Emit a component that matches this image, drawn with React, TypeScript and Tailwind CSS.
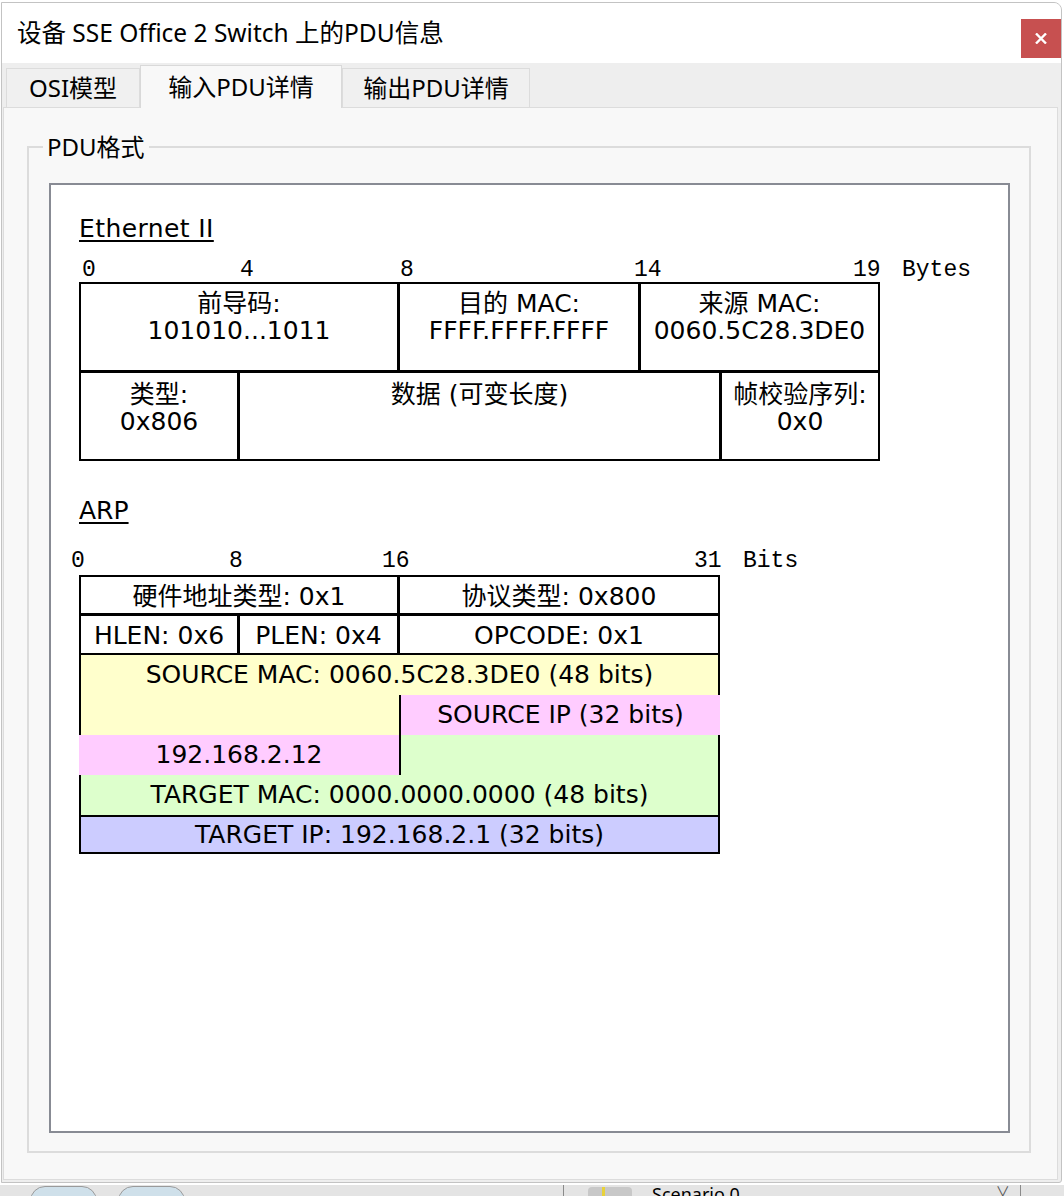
import React from "react";

const ui = "font-['Noto_Sans','Noto_Sans_CJK_SC',sans-serif]";
const cellFont = "font-['DejaVu_Sans','Noto_Sans_CJK_SC',sans-serif]";
const mono = "font-['Liberation_Mono','DejaVu_Sans_Mono',monospace]";

const Cell = ({ lines, className = "" }: { lines: string[]; className?: string }) => (
  <div className={`flex flex-col items-center leading-[27px] ${className}`}>
    {lines.map((l) => (
      <span key={l} className="whitespace-pre">{l}</span>
    ))}
  </div>
);

const Tab = ({ label, active }: { label: string; active?: boolean }) =>
  active ? (
    <div className="relative z-10 -mb-px flex h-[43px] w-[202px] items-center justify-center border-x border-t border-[#d9d9d9] bg-[#f8f8f8] text-[24px] leading-[32px] text-black">
      {label}
    </div>
  ) : (
    <div className="flex h-[39px] items-center justify-center border-x border-t border-[#dcdcdc] bg-[#f0f0f0] text-[24px] leading-[32px] text-black">
      {label}
    </div>
  );

export default function App() {
  return (
    <div className={`flex h-[1196px] w-[1064px] flex-col overflow-hidden bg-white ${ui}`}>
      {/* window */}
      <div className="ml-px mt-[2px] flex h-[1181px] w-[1061px] flex-col overflow-hidden rounded-tr-[8px] rounded-br-[3px] border border-[#c3c3c3] bg-[#eeeeee]">
        {/* title bar */}
        <div className="flex h-[60px] shrink-0 items-start justify-between bg-white">
          <div className="pl-[15px] pt-[14px] text-[24.5px] leading-[32px] text-black">设备 SSE Office 2 Switch 上的PDU信息</div>
          <div className="mt-[16px] flex h-[39px] w-[40px] items-center justify-center bg-[#c75050]">
            <svg width="12" height="11" viewBox="0 0 12 11">
              <path d="M1 0.5 L11 10.5 M11 0.5 L1 10.5" stroke="white" strokeWidth="2.4" fill="none" />
            </svg>
          </div>
        </div>

        {/* tabs */}
        <div className="flex h-[44px] shrink-0 items-end pl-[4px]">
          <div className="w-[134px]"><Tab label="OSI模型" /></div>
          <Tab label="输入PDU详情" active />
          <div className="w-[188px]"><Tab label="输出PDU详情" /></div>
        </div>

        {/* panel */}
        <div className="mb-[2px] ml-px mr-[3px] flex-1 border border-[#dcdcdc] bg-[#f8f8f8] pl-[23px] pr-[26px] pt-[23px]">
          <fieldset className="m-0 min-w-0 border-2 border-[#dcdcdc] p-0">
            <legend className="ml-[14px] px-[4px] text-[24px] leading-[32px] text-black">PDU格式</legend>
            <div className={`mb-[18px] ml-[20px] mr-[19px] mt-[20px] h-[950px] border-2 border-[#888b94] bg-white pl-[28px] pt-[29px] text-[25px] text-black ${cellFont}`}>
              {/* Ethernet II */}
              <div className="leading-[30px] tracking-[0.4px] underline decoration-2 underline-offset-[3px]">Ethernet II</div>
              <div className={`ml-[3px] mt-[14px] flex h-[24px] text-[23px] leading-[24px] ${mono}`}>
                <span className="w-[158px]">0</span>
                <span className="w-[160px]">4</span>
                <span className="w-[234px]">8</span>
                <span className="w-[219px]">14</span>
                <span className="w-[49px]">19</span>
                <span>Bytes</span>
              </div>
              <div className="w-[801px] border-2 border-black">
                <div className="flex h-[86px]">
                  <Cell className="w-[316px] pt-[6px]" lines={["前导码:", "101010...1011"]} />
                  <Cell className="w-[241px] border-l-[3px] border-black pt-[6px]" lines={["目的 MAC:", "FFFF.FFFF.FFFF"]} />
                  <Cell className="flex-1 border-l-[3px] border-black pt-[6px]" lines={["来源 MAC:", "0060.5C28.3DE0"]} />
                </div>
                <div className="flex h-[89px] border-t-[3px] border-black">
                  <Cell className="w-[156px] pt-[8px]" lines={["类型:", "0x806"]} />
                  <Cell className="w-[482px] border-l-[3px] border-black pt-[8px]" lines={["数据 (可变长度)"]} />
                  <Cell className="flex-1 border-l-[3px] border-black pt-[8px]" lines={["帧校验序列:", "0x0"]} />
                </div>
              </div>

              {/* ARP */}
              <div className="mt-[35px] leading-[30px] underline decoration-2 underline-offset-[3px]">ARP</div>
              <div className={`-ml-[8px] mt-[23px] flex h-[24px] text-[23px] leading-[24px] ${mono}`}>
                <span className="w-[158px]">0</span>
                <span className="w-[153px]">8</span>
                <span className="w-[312px]">16</span>
                <span className="w-[49px]">31</span>
                <span>Bits</span>
              </div>
              <div className="mt-[2px] w-[641px]">
                <div className="border-2 border-black">
                  <div className="flex h-[36px]">
                    <div className="flex w-[316px] items-center justify-center pt-[3px]">硬件地址类型: 0x1</div>
                    <div className="flex flex-1 items-center justify-center border-l-[3px] border-black pt-[3px]">协议类型: 0x800</div>
                  </div>
                  <div className="flex h-[40px] border-t-[3px] border-black">
                    <div className="flex w-[156px] items-center justify-center pt-[3px]">HLEN: 0x6</div>
                    <div className="flex w-[160px] items-center justify-center border-l-[3px] border-black pt-[3px]">PLEN: 0x4</div>
                    <div className="flex flex-1 items-center justify-center border-l-[3px] border-black pt-[3px]">OPCODE: 0x1</div>
                  </div>
                </div>
                <div className="flex h-[40px] items-center justify-center border-x-2 border-black bg-[#ffffcc]">
                  SOURCE MAC: 0060.5C28.3DE0 (48 bits)
                </div>
                <div className="flex h-[40px]">
                  <div className="w-[320px] border-l-2 border-black bg-[#ffffcc]" />
                  <div className="flex flex-1 items-center justify-center border-l-2 border-black bg-[#ffccff]">SOURCE IP (32 bits)</div>
                </div>
                <div className="flex h-[40px]">
                  <div className="flex w-[320px] items-center justify-center bg-[#ffccff]">192.168.2.12</div>
                  <div className="flex-1 border-x-2 border-black bg-[#ddffcc]" />
                </div>
                <div className="flex h-[40px] items-center justify-center border-x-2 border-black bg-[#ddffcc]">
                  TARGET MAC: 0000.0000.0000 (48 bits)
                </div>
                <div className="flex h-[39px] items-center justify-center border-2 border-black bg-[#ccccff]">
                  TARGET IP: 192.168.2.1 (32 bits)
                </div>
              </div>
            </div>
          </fieldset>
        </div>
      </div>

      {/* desktop strip below the window */}
      <div className="mt-[2px] flex h-[11px] items-start overflow-hidden bg-[#e4e4e4]">
        <div className="ml-[30px] mt-[1px] h-[30px] w-[67px] rounded-full border border-[#9a9a9a] bg-[#cfe0ea]" />
        <div className="ml-[21px] mt-[1px] h-[30px] w-[67px] rounded-full border border-[#9a9a9a] bg-[#cfe0ea]" />
        <div className="ml-[378px] h-full w-px bg-[#8a8a8a]" />
        <div className="ml-[24px] mt-[2px] h-[20px] w-[44px] rounded-sm bg-[#c8c8c8]">
          <div className="ml-[14px] h-full w-[3px] bg-[#e8d23a]" />
        </div>
        <div className="ml-[20px] text-[18px] leading-[18px] text-black">Scenario 0</div>
        <div className="ml-[256px] text-[14px] leading-[12px] text-[#555]">∨</div>
        <div className="ml-[10px] h-full w-px bg-[#8a8a8a]" />
      </div>
    </div>
  );
}
